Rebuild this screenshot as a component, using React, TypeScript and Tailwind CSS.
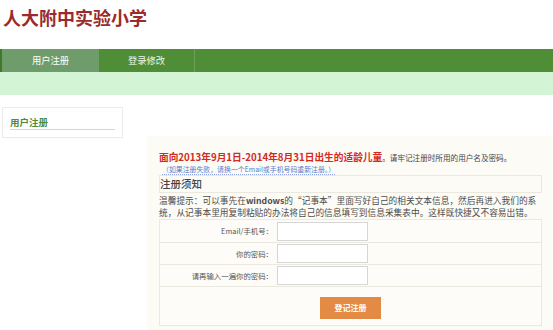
const fields = [
  { label: 'Email/手机号：', type: 'text' },
  { label: '你的密码：', type: 'password' },
  { label: '请再输入一遍你的密码：', type: 'password' },
];

const App = () => {
  return (
    <div className="h-[330px] w-[553px] overflow-hidden bg-white font-['Noto_Sans_CJK_SC','Noto_Sans',sans-serif] text-[#444]">
      <header className="h-[49px] pl-[3px] pt-[6px]">
        <h1 className="text-[18px] font-bold leading-[22px] text-[#9b2b2b]">
          人大附中实验小学
        </h1>
      </header>

      <nav className="flex h-[23px] border-l-2 border-[#3f7a2c] bg-[#4f8e37] text-[9.3px] leading-[23px] text-white">
        <a className="w-[97px] bg-[#6f9c6b] text-center">用户注册</a>
        <a className="w-[96px] border-r border-[#6ea25a] text-center text-[#eef5ea]">
          登录修改
        </a>
      </nav>
      <div className="h-[23px] bg-[#d3f5d5]" />

      <div className="flex items-start pt-[12px]">
        <aside className="ml-[2px] h-[31px] w-[121px] border border-[#ebebeb] pl-[7px] pr-[7px] pt-[8px]">
          <h3 className="border-b border-[#d6d6d6] pb-px text-[9.5px] font-bold leading-[12px] text-[#4d8a3b]">
            用户注册
          </h3>
        </aside>

        <main className="ml-[24px] mt-[29px] h-[200px] flex-1 bg-[#fcfbf6] pl-[12px] pr-[11px] pt-[12px]">
          <p className="whitespace-nowrap leading-[12px]">
            <span className="text-[9.7px] font-bold text-[#d22a22]">
              面向2013年9月1日-2014年8月31日出生的适龄儿童
            </span>
            <span className="text-[7.6px] text-[#444]">
              。请牢记注册时所用的用户名及密码。
            </span>
          </p>
          <p className="whitespace-nowrap pl-[3px] text-[6.9px] leading-[10px] text-[#5a7ad0]">
            <span className="border-b border-dotted border-[#8fa3e0]">
              （如果注册失败，请换一个Email或手机号码重新注册。）
            </span>
          </p>

          <h2 className="mt-px h-[18px] border border-[#ebe8df] text-[10.5px] font-medium leading-[16px] text-[#444]">
            注册须知
          </h2>
          <p className="whitespace-nowrap pt-[2px] text-[8.7px] leading-[12px] text-[#4d4d4d]">
            温馨提示：可以事先在<span className="font-bold">windows</span>
            的“记事本”里面写好自己的相关文本信息，然后再进入我们的系
            <br />
            统，从记事本里用复制粘贴的办法将自己的信息填写到信息采集表中。这样既快捷又不容易出错。
          </p>

          <div className="border-x border-b border-[#ebe8df] bg-[#fdfcf8]">
            {fields.map((f, i) => (
              <div
                key={f.label}
                className={`flex items-center border-t border-[#ebe8df] ${i === 0 ? 'h-[23px]' : 'h-[22px]'}`}
              >
                <label className="w-[114px] pr-[1px] text-right text-[7.4px] text-[#555]">
                  {f.label}
                </label>
                <input
                  type={f.type}
                  className="ml-[3px] h-[19px] w-[91px] border border-[#d6d6d6] bg-white outline-none"
                />
              </div>
            ))}
            <div className="flex h-[39px] justify-center border-t border-[#ebe8df] pt-[10px]">
              <button className="h-[22px] w-[61px] bg-[#e38b45] text-[8px] font-bold text-white">
                登记注册
              </button>
            </div>
          </div>
        </main>
      </div>
    </div>
  );
};

export default App;
